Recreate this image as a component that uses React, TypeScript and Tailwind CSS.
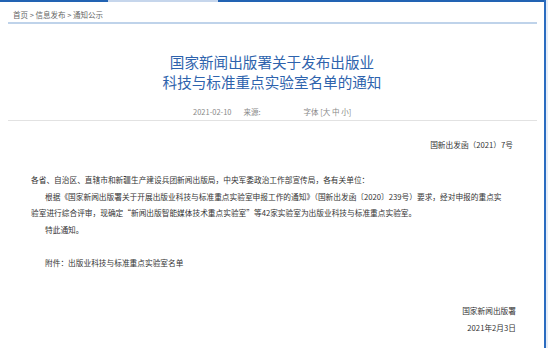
import React from "react";

const FONT = { fontFamily: '"Noto Sans CJK SC", "Liberation Sans", sans-serif' };

const BODY = [
  { indent: false, text: "各省、自治区、直辖市和新疆生产建设兵团新闻出版局，中央军委政治工作部宣传局，各有关单位：" },
  { indent: true, text: "根据《国家新闻出版署关于开展出版业科技与标准重点实验室申报工作的通知》（国新出发函〔2020〕239号）要求，经对申报的重点实" },
  { indent: false, text: "验室进行综合评审，现确定“新闻出版智能媒体技术重点实验室”等42家实验室为出版业科技与标准重点实验室。" },
  { indent: true, text: "特此通知。" },
];

export default function App() {
  return (
    <div className="flex h-[348px] w-[548px] overflow-hidden bg-white" style={FONT}>
      <div className="flex w-[544px] flex-col">
        {/* top tab strip */}
        <div className="flex h-[2px]">
          <div className="w-[108px] bg-[#2263b3]" />
          <div className="w-[110px] bg-[#c6d6ec]" />
          <div className="flex-1 bg-[#2263b3]" />
        </div>

        <div className="pl-[13px] pt-[7px] text-[7.5px] leading-[12px] text-[#666]">
          首页 &gt; 信息发布 &gt; 通知公示
        </div>
        <div className="ml-[8px] mr-[7px] mt-[1px] h-[2px] bg-[#bfd3ea]" />

        <div className="mt-[28px] text-center text-[14.6px] leading-[20px] text-[#2e63ad]">
          <div>国家新闻出版署关于发布出版业</div>
          <div>科技与标准重点实验室名单的通知</div>
        </div>

        <div className="mt-[14px] flex text-[7.5px] leading-[12px] text-[#888]">
          <span className="ml-[193px]">2021-02-10</span>
          <span className="ml-[12px]">来源:</span>
          <span className="ml-[43px]">字体 [大 中 小]</span>
        </div>
        <div className="ml-[8px] mr-[7px] mt-[2px] h-px bg-[#e2e2e2]" />

        <div className="mt-[18px] pr-[31px] text-right text-[7.7px] leading-[12px] text-[#333]">
          国新出发函（2021）7号
        </div>

        <div className="mt-[21px] pl-[31px] text-[7.7px] leading-[16.5px] text-[#333]">
          {BODY.map((l, i) => (
            <div key={i} className={l.indent ? "ml-[14px] whitespace-nowrap" : "whitespace-nowrap"}>
              {l.text}
            </div>
          ))}
          <div className="ml-[14px] mt-[16.5px]">附件：出版业科技与标准重点实验室名单</div>
        </div>

        <div className="mt-[32px] pr-[28px] text-right text-[7.7px] leading-[16.5px] text-[#333]">
          <div>国家新闻出版署</div>
          <div>2021年2月3日</div>
        </div>
      </div>
      <div className="w-[2px] bg-[#2b6cc0]" />
      <div className="flex-1 bg-[#e6edf7]" />
    </div>
  );
}
